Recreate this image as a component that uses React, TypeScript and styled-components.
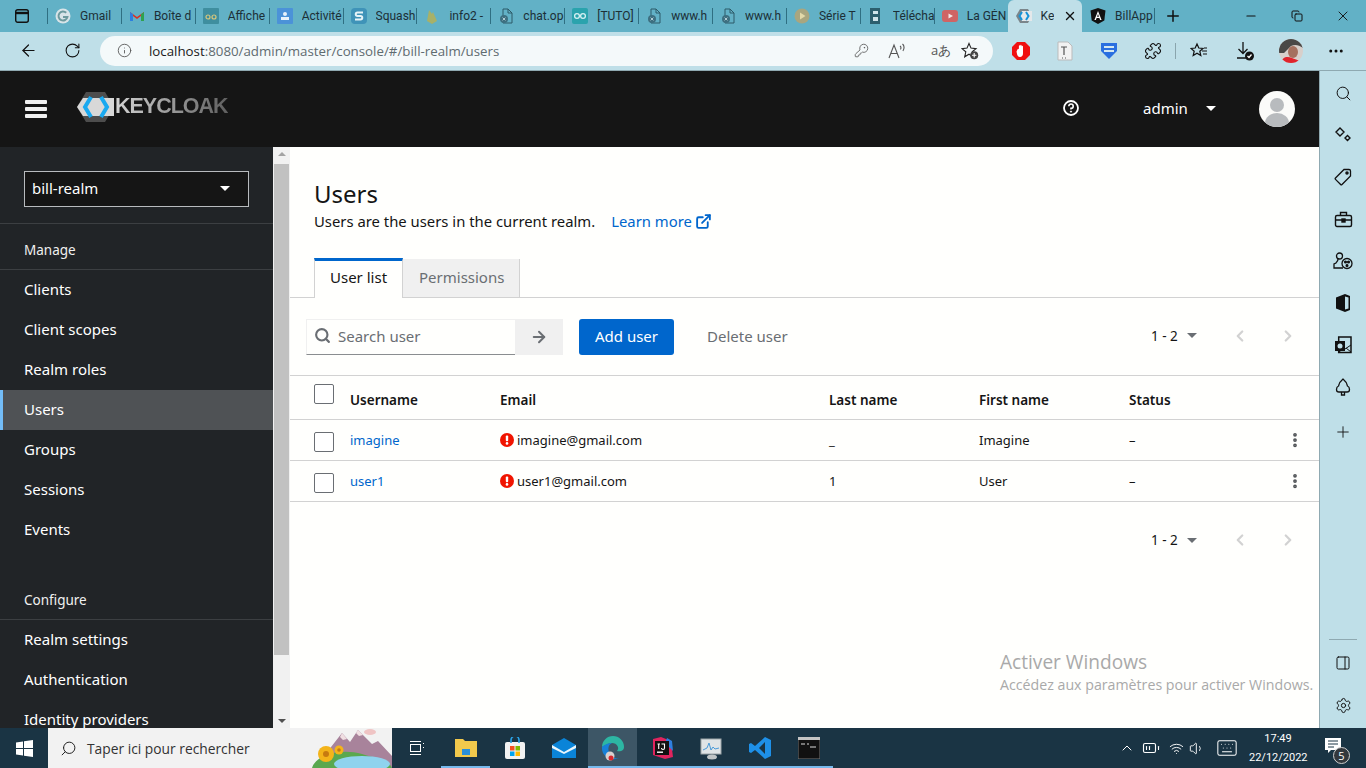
import styled, { createGlobalStyle } from "styled-components";
import {
  ArrowLeft, ArrowRight, ChevronLeft, ChevronRight, ChevronUp, Copy, ExternalLink,
  Info, KeyRound, Minus, MoreHorizontal, MoreVertical, PanelRight, Plus, Puzzle, RotateCw,
  Search, Settings, Wifi, Volume1, BatteryMedium, Keyboard, X,
} from "lucide-react";

const Global = createGlobalStyle`
  html, body { margin: 0; padding: 0; height: 100%; overflow: hidden; }
  body { font-family: "Noto Sans", "Open Sans", sans-serif; color: #151515; background: #fff; }
  * { box-sizing: border-box; }
`;

const Page = styled.div`
  width: 1366px;
  height: 768px;
  display: flex;
  flex-direction: column;
  overflow: hidden;
  position: relative;
`;

/* browser chrome */
const TabStrip = styled.div`
  height: 32px;
  display: flex;
  align-items: stretch;
  background: #62b1c6;
  font-family: Roboto, "Open Sans", sans-serif;
  font-size: 12px;
`;
const TabToggle = styled.div`
  width: 47px;
  display: flex;
  align-items: center;
  justify-content: center;
  padding-right: 4px;
`;
const BrowserTab = styled.div`
  width: 73.9px;
  display: flex;
  align-items: center;
  gap: 9px;
  padding-left: 8px;
  white-space: nowrap;
  overflow: hidden;
  color: #1c2f36;
  position: relative;
  &::before {
    content: "";
    position: absolute;
    left: 0;
    top: 8px;
    bottom: 8px;
    width: 1px;
    background: #2f6f82;
  }
`;
const ActiveTab = styled(BrowserTab)`
  width: 74.5px;
  padding-right: 5px;
  background: #bfdfe8;
  border-radius: 6px 6px 0 0;
  &::before { display: none; }
`;
const LastTab = styled(BrowserTab)`
  width: 71.5px;
  &::before { display: none; }
`;
const TabLabel = styled.span`
  flex: 1;
  overflow: hidden;
`;
const NewTab = styled.div`
  width: 38px;
  border-left: 1px solid #2f6f82;
  margin: 8px 0;
  display: flex;
  align-items: center;
  justify-content: center;
`;
const WindowButtons = styled.div`
  margin-left: auto;
  display: flex;
`;
const WindowButton = styled.div`
  width: 46px;
  display: flex;
  align-items: center;
  justify-content: center;
`;
const AddressRow = styled.div`
  height: 39px;
  display: flex;
  align-items: center;
  background: #bfdfe8;
  border-bottom: 1px solid #8fa9b1;
  padding-bottom: 1px;
`;
const NavIcon = styled.div`
  width: 44px;
  flex: none;
  display: flex;
  align-items: center;
  justify-content: center;
`;
const NavGroup = styled.div`
  width: 100px;
  flex: none;
  display: flex;
  padding-left: 6px;
`;
const AddressPill = styled.div`
  width: 893px;
  height: 30px;
  border-radius: 15px;
  background: #f4f9fa;
  display: flex;
  align-items: center;
  padding: 0 11px 0 17px;
  font-family: "Open Sans", sans-serif;
  font-size: 13.3px;
  color: #5f6b70;
`;
const Url = styled.span`
  margin-left: 17px;
  flex: 1;
  b { font-weight: 400; color: #1a1a1a; }
`;
const PillTool = styled.div<{ $w: number }>`
  width: ${(p) => p.$w}px;
  display: flex;
  align-items: center;
  justify-content: center;
  color: #555;
  font-size: 13px;
`;
const ChromeTools = styled.div`
  display: flex;
  align-items: center;
  margin-left: 6px;
`;
const ChromeTool = styled.div<{ $w?: number }>`
  width: ${(p) => p.$w ?? 44}px;
  display: flex;
  align-items: center;
  justify-content: center;
`;
const ToolDivider = styled.div`
  width: 1px;
  height: 16px;
  background: #8aa5ad;
`;

/* workspace */
const Workspace = styled.div`
  flex: 1;
  min-height: 0;
  display: flex;
`;
const Console = styled.div`
  flex: 1;
  min-width: 0;
  display: flex;
  flex-direction: column;
`;
const Masthead = styled.header`
  height: 76px;
  flex: none;
  background: #151515;
  display: flex;
  align-items: center;
  color: #fff;
  padding-left: 25px;
`;
const Burger = styled.div`
  width: 52px;
  display: flex;
  flex-direction: column;
  gap: 3px;
  span { display: block; width: 22px; height: 4px; background: #f0f0f0; border-radius: 1px; }
`;
const Logo = styled.div`
  display: flex;
  align-items: center;
  margin-bottom: 4px;
`;
const LogoText = styled.span`
  font-family: "Liberation Sans", sans-serif;
  font-weight: 700;
  font-size: 21.5px;
  letter-spacing: -1px;
  margin-left: 1px;
  margin-bottom: 2px;
  background: linear-gradient(90deg, #d4d4d4, #5f5f5f);
  -webkit-background-clip: text;
  background-clip: text;
  color: transparent;
`;
const MastRight = styled.div`
  margin-left: auto;
  display: flex;
  align-items: center;
  padding-right: 24px;
`;
const HelpIcon = styled.svg`
  margin-bottom: 2px;
`;
const AdminMenu = styled.div`
  margin-left: 64px;
  width: 116px;
  display: flex;
  align-items: center;
  font-size: 15px;
  gap: 18px;
  padding-bottom: 2px;
`;
const Caret = styled.i<{ $color?: string; $w?: number }>`
  display: inline-block;
  width: 0;
  height: 0;
  border-left: ${(p) => p.$w ?? 5}px solid transparent;
  border-right: ${(p) => p.$w ?? 5}px solid transparent;
  border-top: ${(p) => p.$w ?? 5}px solid ${(p) => p.$color ?? "#fff"};
`;
const Body = styled.div`
  flex: 1;
  min-height: 0;
  display: flex;
`;
const Sidebar = styled.nav`
  width: 273px;
  flex: none;
  background: #212427;
  color: #fff;
  overflow: hidden;
`;
const RealmBox = styled.div`
  padding: 24px 24px 16px;
  border-bottom: 1px solid #3c3f42;
`;
const RealmSelect = styled.div`
  height: 36px;
  background: #151515;
  border: 1px solid #b8bbbe;
  display: flex;
  align-items: center;
  justify-content: space-between;
  padding: 0 18px 2px 7px;
  font-size: 15px;
`;
const NavHeading = styled.div<{ $gap?: number }>`
  height: 46px;
  margin-top: ${(p) => p.$gap ?? 0}px;
  padding: 16px 24px 0;
  font-size: 13.5px;
  line-height: 20px;
  color: #f0f0f0;
  border-bottom: 1px solid #3c3f42;
`;
const NavItem = styled.div<{ $active?: boolean }>`
  height: 40px;
  display: flex;
  align-items: center;
  padding: 0 0 2px 24px;
  font-size: 15px;
  background: ${(p) => (p.$active ? "#4f5255" : "transparent")};
  box-shadow: ${(p) => (p.$active ? "inset 3px 0 0 #73bcf7" : "none")};
`;
const ScrollTrack = styled.div`
  width: 17px;
  flex: none;
  background: #f1f1f1;
  display: flex;
  flex-direction: column;
  align-items: center;
  padding: 5px 0;
`;
const ScrollThumb = styled.div`
  width: 15px;
  height: 491px;
  margin: 8px 0 auto;
  background: #c1c1c1;
`;
const ScrollArrow = styled.i<{ $down?: boolean }>`
  width: 0;
  height: 0;
  border-left: 4px solid transparent;
  border-right: 4px solid transparent;
  ${(p) => (p.$down ? "border-top: 4px solid #505050;" : "border-bottom: 4px solid #a3a3a3;")}
`;
const Main = styled.main`
  flex: 1;
  min-width: 0;
  background: #fffffd;
`;
const TitleBlock = styled.div`
  padding: 32px 24px 0;
  height: 111px;
`;
const Title = styled.h1`
  margin: 0;
  font-size: 24px;
  font-weight: 400;
  line-height: 30px;
`;
const Subtitle = styled.p`
  margin: 0;
  font-size: 14.85px;
  line-height: 24px;
  display: flex;
  align-items: center;
`;
const LearnMore = styled.span`
  margin-left: 16px;
  color: #06c;
  display: inline-flex;
  align-items: center;
  gap: 3px;
`;
const TabRow = styled.div`
  height: 40px;
  display: flex;
  align-items: stretch;
  padding-left: 24px;
  border-bottom: 1px solid #d2d2d2;
`;
const PageTab = styled.div<{ $active?: boolean }>`
  display: flex;
  align-items: center;
  white-space: nowrap;
  font-size: 15px;
  ${(p) =>
    p.$active
      ? "height: 40px; width: 89px; padding: 0 15px 5px; background: #fffffd; border-top: 3px solid #06c; border-left: 1px solid #d2d2d2; border-right: 1px solid #d2d2d2; color: #151515;"
      : "width: 117px; padding: 0 16px 2px; margin-top: 1px; background: #f0f0f0; color: #6a6e73; border-right: 1px solid #d2d2d2;"}
`;
const Toolbar = styled.div`
  height: 78px;
  display: flex;
  align-items: center;
  padding: 0 16px;
  border-bottom: 1px solid #d2d2d2;
`;
const SearchBox = styled.div`
  width: 209px;
  height: 36px;
  display: flex;
  align-items: center;
  gap: 7px;
  padding: 0 0 2px 7px;
  border: 1px solid #f0f0f0;
  border-bottom-color: #8a8d90;
  border-right: none;
  font-size: 15px;
  color: #6a6e73;
`;
const SearchGo = styled.div`
  width: 48px;
  height: 36px;
  background: #f0f0f0;
  display: flex;
  align-items: center;
  justify-content: center;
`;
const PrimaryButton = styled.div`
  margin-left: 16px;
  width: 95px;
  height: 36px;
  padding-bottom: 2px;
  background: #06c;
  color: #fff;
  border-radius: 3px;
  display: flex;
  align-items: center;
  justify-content: center;
  font-size: 15px;
`;
const LinkButton = styled.div`
  margin-left: 33px;
  padding-bottom: 2px;
  font-size: 15px;
  color: #6a6e73;
`;
const Pager = styled.div`
  margin-left: auto;
  display: flex;
  align-items: center;
  font-size: 13.5px;
  padding: 0 6px 2px 0;
`;
const PagerCount = styled.span`
  width: 36px;
  white-space: nowrap;
`;
const PagerArrows = styled.span`
  margin-left: 34px;
  display: flex;
  gap: 30px;
  color: #d2d2d2;
`;
const TableRow = styled.div<{ $head?: boolean }>`
  display: grid;
  grid-template-columns: 60px 150px 329px 150px 150px 1fr 33px;
  height: ${(p) => (p.$head ? 44 : 41)}px;
  align-items: center;
  font-size: ${(p) => (p.$head ? 13.5 : 13)}px;
  font-weight: ${(p) => (p.$head ? 600 : 400)};
  border-bottom: 1px solid #d2d2d2;
`;
const CheckCell = styled.div`
  padding-left: 24px;
`;
const Check = styled.div<{ $lift?: boolean }>`
  width: 20px;
  height: 20px;
  border: 1px solid #6a6e73;
  border-radius: 2px;
  background: #fff;
  transform: translateY(${(p) => (p.$lift ? -4 : 2)}px);
`;
const HeadCell = styled.div`
  padding-top: 4px;
`;
const UserLink = styled.span`
  color: #06c;
`;
const EmailCell = styled.div`
  display: flex;
  align-items: center;
  gap: 3px;
`;
const Kebab = styled.div`
  display: flex;
  color: #4f5255;
`;
const BottomPager = styled.div`
  height: 78px;
  display: flex;
  align-items: center;
  padding: 0 16px;
`;
const Watermark = styled.div`
  position: absolute;
  left: 1000px;
  top: 649px;
  color: #a9a9a9;
  font-family: "Open Sans", sans-serif;
  font-size: 14.2px;
  line-height: 20px;
  white-space: nowrap;
  strong { display: block; font-weight: 400; font-size: 19.1px; line-height: 26px; }
`;
const SidePanel = styled.aside`
  width: 47px;
  flex: none;
  background: #bfdfe8;
  border-left: 1px solid #8fa9b1;
  display: flex;
  flex-direction: column;
  align-items: center;
  padding: 1px 0 2px;
`;
const SideIcon = styled.div<{ $h?: number }>`
  height: ${(p) => p.$h ?? 42}px;
  display: flex;
  align-items: center;
  justify-content: center;
`;
const SideRule = styled.div`
  width: 28px;
  height: 1px;
  margin: auto 0 2px;
  background: #8fa9b1;
`;

/* taskbar */
const Taskbar = styled.footer`
  height: 40px;
  flex: none;
  background: #1a3444;
  display: flex;
  align-items: stretch;
  color: #fff;
  font-family: "Open Sans", sans-serif;
`;
const StartButton = styled.div`
  width: 48px;
  display: flex;
  align-items: center;
  justify-content: center;
`;
const TaskSearch = styled.div`
  width: 344px;
  background: #f2f2f2;
  color: #333;
  font-size: 13.8px;
  display: flex;
  align-items: center;
  padding-left: 12px;
  gap: 10px;
  position: relative;
  overflow: hidden;
`;
const MirroredSearch = styled(Search)`
  transform: scaleX(-1);
`;
const SearchArt = styled.div`
  position: absolute;
  right: 0;
  top: 0;
  height: 40px;
`;
const TaskApp = styled.div<{ $open?: boolean; $active?: boolean }>`
  width: 49px;
  display: flex;
  align-items: center;
  justify-content: center;
  background: ${(p) => (p.$active ? "#3d5666" : "transparent")};
  box-shadow: ${(p) => (p.$open ? "inset 0 -2px 0 #76b9ed" : "none")};
`;
const Tray = styled.div`
  margin-left: auto;
  display: flex;
  align-items: center;
`;
const TrayIcon = styled.div<{ $w?: number }>`
  width: ${(p) => p.$w ?? 24}px;
  display: flex;
  align-items: center;
  justify-content: center;
`;
const Clock = styled.div`
  width: 58px;
  text-align: center;
  white-space: nowrap;
  font-family: Roboto, sans-serif;
  font-size: 11px;
  line-height: 19px;
`;
const Notify = styled.div`
  width: 48px;
  align-self: stretch;
  margin-left: 11px;
  padding: 0 18px 6px 0;
  position: relative;
  display: flex;
  align-items: center;
  justify-content: center;
`;
const NotifyBadge = styled.span`
  position: absolute;
  left: 15px;
  top: 19px;
  width: 17px;
  height: 17px;
  border-radius: 50%;
  background: #33383d;
  border: 1px solid #cfcfcf;
  font-size: 11px;
  line-height: 15px;
  text-align: center;
`;

const Favicon = ({ kind }: { kind: string }) => {
  const s = { width: 16, height: 16, flex: "none" as const };
  switch (kind) {
    case "google":
      return (
        <svg viewBox="0 0 16 16" style={s}>
          <circle cx="8" cy="8" r="7.5" fill="#d8e4e8" />
          <path d="M11.2 4.8A4.5 4.5 0 1 0 12.4 9H8" fill="none" stroke="#6d9a9e" strokeWidth="2" />
        </svg>
      );
    case "gmail":
      return (
        <svg viewBox="0 0 16 16" style={s}>
          <path d="M1 13V4l7 5 7-5v9h-3V8L8 11 4 8v5z" fill="#d93025" />
          <path d="M1 13V4l3 2.2V13z" fill="#2c7fe0" />
          <path d="M15 13V4l-3 2.2V13z" fill="#2fa24f" />
        </svg>
      );
    case "teal":
      return (
        <svg viewBox="0 0 16 16" style={s}>
          <rect width="16" height="16" rx="1" fill="#3f8e9f" />
          <circle cx="5" cy="9" r="2" fill="none" stroke="#d6c77c" strokeWidth="1.2" />
          <circle cx="11" cy="9" r="2" fill="none" stroke="#d6c77c" strokeWidth="1.2" />
        </svg>
      );
    case "activity":
      return (
        <svg viewBox="0 0 16 16" style={s}>
          <rect width="16" height="16" rx="1" fill="#4b92d8" />
          <circle cx="8" cy="6" r="2" fill="#e8f3fb" />
          <rect x="4" y="9" width="8" height="3" fill="#e8f3fb" />
        </svg>
      );
    case "squash":
      return (
        <svg viewBox="0 0 16 16" style={s}>
          <rect width="16" height="16" rx="4" fill="#3f93b8" />
          <path d="M12 4.5H6.5a1.7 1.7 0 0 0 0 3.5h3a1.7 1.7 0 0 1 0 3.5H4" fill="none" stroke="#e6f3f7" strokeWidth="2" />
        </svg>
      );
    case "fire":
      return (
        <svg viewBox="0 0 16 16" style={s}>
          <path d="M3 13L5 2l3 4 1-2 4 9-5 3z" fill="#a7b168" />
        </svg>
      );
    case "doc":
      return (
        <svg viewBox="0 0 16 16" style={s}>
          <path d="M5 1h5l4 4v10H5z" fill="none" stroke="#2d5a68" />
          <path d="M10 1v4h4" fill="none" stroke="#2d5a68" />
          <circle cx="6" cy="11" r="4" fill="#3d6f80" />
          <path d="M4.6 9.6l2.8 2.8M7.4 9.6l-2.8 2.8" stroke="#cfe4ea" strokeWidth=".8" />
        </svg>
      );
    case "arduino":
      return (
        <svg viewBox="0 0 16 16" style={s}>
          <rect width="16" height="16" rx="2" fill="#2aa3ad" />
          <circle cx="5" cy="8" r="2.4" fill="none" stroke="#d5f0f2" strokeWidth="1.3" />
          <circle cx="11" cy="8" r="2.4" fill="none" stroke="#d5f0f2" strokeWidth="1.3" />
        </svg>
      );
    case "play":
      return (
        <svg viewBox="0 0 16 16" style={s}>
          <circle cx="8" cy="8" r="7.5" fill="#a9a67f" />
          <path d="M6 4.5l5.5 3.5L6 11.5z" fill="#e2d9a9" />
        </svg>
      );
    case "tele":
      return (
        <svg viewBox="0 0 16 16" style={s}>
          <rect x="2" y="0" width="10" height="16" fill="#2c5f6e" />
          <rect x="5" y="3" width="5" height="3" fill="#cfe4ea" />
          <rect x="5" y="9" width="5" height="4" fill="#cfe4ea" />
        </svg>
      );
    case "youtube":
      return (
        <svg viewBox="0 0 16 16" style={s}>
          <rect y="2" width="16" height="12" rx="3" fill="#cf6464" />
          <path d="M6.5 5.5L11 8l-4.5 2.5z" fill="#f2e6e6" />
        </svg>
      );
    case "keycloak":
      return (
        <svg viewBox="0 0 16 16" style={s}>
          <path d="M4 1h8l4 7-4 7H4L0 8z" fill="#7b858a" />
          <path d="M3 8l3-5h10v10H6z" fill="#e4e8ea" />
          <path d="M6 4L3.5 8 6 12M10 4l2.5 4-2.5 4" fill="none" stroke="#1793d8" strokeWidth="2" />
        </svg>
      );
    default:
      return (
        <svg viewBox="0 0 16 16" style={s}>
          <path d="M8 0l7.5 2.6-1.2 9.8L8 16l-6.3-3.6L.5 2.6z" fill="#111" />
          <path d="M8 3l3.6 9h-1.5l-.7-2H6.6l-.7 2H4.4zM8 6l-1 2.7h2z" fill="#fff" />
        </svg>
      );
  }
};

const KeycloakMark = () => (
  <svg width="37" height="30" viewBox="0 0 37 30">
    <path d="M9 0h19l9 15-9 15H9L0 15z" fill="#4d4d4d" />
    <path d="M0 15l6-9h31v18H6z" fill="#d8d8d8" />
    <path d="M14 5L8 15l6 10M24 5l6 10-6 10" fill="none" stroke="#19a9f0" strokeWidth="4" />
  </svg>
);

const WarnIcon = () => (
  <svg width="14" height="14" viewBox="0 0 14 14">
    <circle cx="7" cy="7" r="7" fill="#f01400" />
    <rect x="5.8" y="2.6" width="2.4" height="5.6" rx="1" fill="#fff" />
    <circle cx="7" cy="10.4" r="1.3" fill="#fff" />
  </svg>
);

const browserTabs: [string, string][] = [
  ["google", "Gmail"], ["gmail", "Boîte d"], ["teal", "Affiche"], ["activity", "Activité"],
  ["squash", "Squash"], ["fire", "info2 -"], ["doc", "chat.op"], ["arduino", "[TUTO]"],
  ["doc", "www.h"], ["doc", "www.h"], ["play", "Série T"], ["tele", "Télécha"], ["youtube", "La GÉN"],
];

const Pagination = () => (
  <Pager>
    <PagerCount>1 - 2</PagerCount>
    <Caret $color="#6a6e73" />
    <PagerArrows>
      <ChevronLeft size={18} strokeWidth={3} />
      <ChevronRight size={18} strokeWidth={3} />
    </PagerArrows>
  </Pager>
);

const users = [
  { name: "imagine", email: "imagine@gmail.com", last: "_", first: "Imagine" },
  { name: "user1", email: "user1@gmail.com", last: "1", first: "User" },
];

export default function App() {
  return (
    <Page>
      <Global />
      <TabStrip>
        <TabToggle>
          <svg width="16" height="16" viewBox="0 0 16 16" fill="none" stroke="#111" strokeWidth="1.4">
            <rect x="1.7" y="1.7" width="12.6" height="12.6" rx="2" />
            <path d="M2 5h12" strokeWidth="2.4" />
          </svg>
        </TabToggle>
        {browserTabs.map(([kind, label], i) => (
          <BrowserTab key={i}>
            <Favicon kind={kind} />
            <TabLabel>{label}</TabLabel>
          </BrowserTab>
        ))}
        <ActiveTab>
          <Favicon kind="keycloak" />
          <TabLabel>Ke</TabLabel>
          <X size={14} color="#111" strokeWidth={2.4} />
        </ActiveTab>
        <LastTab>
          <Favicon kind="angular" />
          <TabLabel>BillApp</TabLabel>
        </LastTab>
        <NewTab>
          <Plus size={18} color="#111" />
        </NewTab>
        <WindowButtons>
          <WindowButton><Minus size={14} color="#111" /></WindowButton>
          <WindowButton><Copy size={12} color="#111" /></WindowButton>
          <WindowButton><X size={16} color="#111" strokeWidth={1.4} /></WindowButton>
        </WindowButtons>
      </TabStrip>

      <AddressRow>
        <NavGroup>
          <NavIcon><ArrowLeft size={19} strokeWidth={1.5} color="#111" /></NavIcon>
          <NavIcon><RotateCw size={17} strokeWidth={1.5} color="#111" /></NavIcon>
        </NavGroup>
        <AddressPill>
          <Info size={15} strokeWidth={1.4} color="#555" />
          <Url><b>localhost</b>:8080/admin/master/console/#/bill-realm/users</Url>
          <PillTool $w={22}><KeyRound size={15} strokeWidth={1.3} /></PillTool>
          <PillTool $w={52}>
            <svg width="20" height="16" viewBox="0 0 20 16" fill="none" stroke="#555" strokeWidth="1.1">
              <path d="M1 15L6 2l5 13M3 10.5h6M12 3c1.2.8 1.2 2.4.4 3.4M14.5 1c2 1.6 2 5 .4 7" />
            </svg>
          </PillTool>
          <PillTool $w={34}>aあ</PillTool>
          <PillTool $w={24}>
            <svg width="18" height="18" viewBox="0 0 18 18" fill="none" stroke="#222" strokeWidth="1.1">
              <path d="M8 1.5l2 4.6 5 .5-3.8 3.2 1.1 5-4.3-2.6-4.3 2.6 1.1-5L1 6.6l5-.5z" />
              <circle cx="13.2" cy="13.2" r="4" fill="#444" stroke="none" />
              <path d="M13.2 11v4.4M11 13.2h4.4" stroke="#fff" />
            </svg>
          </PillTool>
        </AddressPill>
        <ChromeTools>
          <ChromeTool>
            <svg width="20" height="20" viewBox="0 0 20 20">
              <path d="M6 1h8l5 5v8l-5 5H6l-5-5V6z" fill="#f01010" />
              <path d="M6.500 8.500c0-1 1.400-1 1.400 0V5c0-1 1.300-1 1.300 0V4.500c0-1 1.400-1 1.400 0V5.500c0-1 1.400-1 1.400 0v7c0 2-1.200 3.500-3 3.500s-2.500-1-3-3l-.5-2.500z" fill="#fff" />
            </svg>
          </ChromeTool>
          <ChromeTool>
            <svg width="16" height="20" viewBox="0 0 16 20">
              <path d="M1 1h10l4 4v14H1z" fill="#f2f2f2" stroke="#bbb" />
              <path d="M4 6h6M7 6v8M5 17h1M8 17h1" stroke="#555" strokeWidth="1.2" />
            </svg>
          </ChromeTool>
          <ChromeTool>
            <svg width="18" height="18" viewBox="0 0 18 18">
              <path d="M1 1h16v8l-8 8-8-8z" fill="#2a6fe0" />
              <path d="M4 5h10M4 9h10" stroke="#d5e8f0" strokeWidth="2" />
            </svg>
          </ChromeTool>
          <ChromeTool><Puzzle size={18} strokeWidth={1.5} color="#111" /></ChromeTool>
          <ToolDivider />
          <ChromeTool $w={46}>
            <svg width="18" height="18" viewBox="0 0 18 18" fill="none" stroke="#111" strokeWidth="1.2">
              <path d="M7 2l1.800 4 4.200.4-3.200 2.800 1 4.300L7 11.200 3.200 13.500l1-4.300L1 6.400l4.200-.4zM12 9h5M13 12h4M14 6h3" />
            </svg>
          </ChromeTool>
          <ChromeTool $w={46}>
            <svg width="20" height="20" viewBox="0 0 20 20" fill="none" stroke="#111" strokeWidth="1.3">
              <path d="M8 1v11M3.500 8L8 12.500 12.500 8M2 17h9" />
              <circle cx="14.500" cy="15" r="4.500" fill="#111" stroke="none" />
              <path d="M12.500 15l1.500 1.500 2.500-3" stroke="#fff" />
            </svg>
          </ChromeTool>
          <ChromeTool $w={46}>
            <svg width="24" height="24" viewBox="0 0 24 24">
              <clipPath id="pf"><ellipse cx="12" cy="12" rx="12" ry="12" /></clipPath>
              <g clipPath="url(#pf)">
                <rect width="24" height="24" fill="#d8cfca" />
                <path d="M0 0h24v9c-4-3-8-4-12-2L5 14H0z" fill="#4a4846" />
                <ellipse cx="14" cy="13" rx="5" ry="6" fill="#a5705e" />
                <path d="M2 24c1-6 6-7 11-5s8 2 9 5z" fill="#e0242c" />
              </g>
            </svg>
          </ChromeTool>
          <ChromeTool><MoreHorizontal size={18} color="#111" /></ChromeTool>
        </ChromeTools>
      </AddressRow>

      <Workspace>
        <Console>
          <Masthead>
            <Burger><span /><span /><span /></Burger>
            <Logo>
              <KeycloakMark />
              <LogoText>KEYCLOAK</LogoText>
            </Logo>
            <MastRight>
              <HelpIcon width="16" height="16" viewBox="0 0 16 16" fill="none" stroke="#fff">
                <circle cx="8" cy="8" r="7" strokeWidth="1.8" />
                <path d="M5.800 6.200A2.200 2.200 0 1 1 8 8.400v1.200" strokeWidth="1.6" />
                <circle cx="8" cy="11.600" r=".6" fill="#fff" />
              </HelpIcon>
              <AdminMenu>admin <Caret /></AdminMenu>
              <svg width="36" height="36" viewBox="0 0 36 36">
                <clipPath id="av"><circle cx="18" cy="18" r="18" /></clipPath>
                <g clipPath="url(#av)">
                  <rect width="36" height="36" fill="#fbfbf9" />
                  <circle cx="18" cy="14" r="7" fill="#b8bbbe" />
                  <ellipse cx="18" cy="32" rx="12" ry="10" fill="#b8bbbe" />
                </g>
              </svg>
            </MastRight>
          </Masthead>
          <Body>
            <Sidebar>
              <RealmBox>
                <RealmSelect>bill-realm <Caret /></RealmSelect>
              </RealmBox>
              <NavHeading>Manage</NavHeading>
              <NavItem>Clients</NavItem>
              <NavItem>Client scopes</NavItem>
              <NavItem>Realm roles</NavItem>
              <NavItem $active>Users</NavItem>
              <NavItem>Groups</NavItem>
              <NavItem>Sessions</NavItem>
              <NavItem>Events</NavItem>
              <NavHeading $gap={24}>Configure</NavHeading>
              <NavItem>Realm settings</NavItem>
              <NavItem>Authentication</NavItem>
              <NavItem>Identity providers</NavItem>
            </Sidebar>
            <ScrollTrack>
              <ScrollArrow />
              <ScrollThumb />
              <ScrollArrow $down />
            </ScrollTrack>
            <Main>
              <TitleBlock>
                <Title>Users</Title>
                <Subtitle>
                  Users are the users in the current realm.
                  <LearnMore>Learn more <ExternalLink size={17} strokeWidth={2.6} /></LearnMore>
                </Subtitle>
              </TitleBlock>
              <TabRow>
                <PageTab $active>User list</PageTab>
                <PageTab>Permissions</PageTab>
              </TabRow>
              <Toolbar>
                <SearchBox>
                  <Search size={17} strokeWidth={3} color="#6a6e73" />
                  Search user
                </SearchBox>
                <SearchGo><ArrowRight size={18} strokeWidth={2.6} color="#6a6e73" /></SearchGo>
                <PrimaryButton>Add user</PrimaryButton>
                <LinkButton>Delete user</LinkButton>
                <Pagination />
              </Toolbar>
              <TableRow $head>
                <CheckCell><Check $lift /></CheckCell>
                <HeadCell>Username</HeadCell>
                <HeadCell>Email</HeadCell>
                <HeadCell>Last name</HeadCell>
                <HeadCell>First name</HeadCell>
                <HeadCell>Status</HeadCell>
              </TableRow>
              {users.map((u) => (
                <TableRow key={u.name}>
                  <CheckCell><Check /></CheckCell>
                  <UserLink>{u.name}</UserLink>
                  <EmailCell><WarnIcon />{u.email}</EmailCell>
                  <div>{u.last}</div>
                  <div>{u.first}</div>
                  <div>–</div>
                  <Kebab><MoreVertical size={18} strokeWidth={3} /></Kebab>
                </TableRow>
              ))}
              <BottomPager><Pagination /></BottomPager>
            </Main>
          </Body>
        </Console>
        <SidePanel>
          <SideIcon><Search size={17} strokeWidth={1.4} color="#111" /></SideIcon>
          <SideIcon>
            <svg width="18" height="18" viewBox="0 0 18 18" fill="none" stroke="#111" strokeWidth="1.4">
              <path d="M6 2l4 4-4 4-4-4zM13.500 9.500l2.500 2.500-2.500 2.500-2.500-2.500z" />
            </svg>
          </SideIcon>
          <SideIcon>
            <svg width="18" height="18" viewBox="0 0 18 18" fill="none" stroke="#111" strokeWidth="1.3">
              <path d="M10 1.500h5a1.500 1.500 0 0 1 1.500 1.500v5L8 16.500a1 1 0 0 1-1.400 0L1.500 11.400a1 1 0 0 1 0-1.400z" />
              <circle cx="13" cy="5" r="1.100" fill="#111" />
            </svg>
          </SideIcon>
          <SideIcon>
            <svg width="19" height="17" viewBox="0 0 19 17" fill="none" stroke="#111" strokeWidth="1.4">
              <rect x="1.500" y="4.500" width="16" height="11" rx="1.500" />
              <path d="M6.500 4.500v-3h6v3M1.500 9h16" />
              <rect x="8" y="8" width="3" height="3" fill="#111" />
            </svg>
          </SideIcon>
          <SideIcon>
            <svg width="20" height="18" viewBox="0 0 20 18" fill="none" stroke="#111" strokeWidth="1.3">
              <circle cx="6.500" cy="4" r="3" />
              <path d="M5 7c0 2-1 2.500-2 4l-2 1v4h9" />
              <circle cx="14" cy="11.500" r="5" />
              <circle cx="12.500" cy="10" r=".9" fill="#111" />
              <circle cx="15.500" cy="10" r=".9" fill="#111" />
              <circle cx="14" cy="13.500" r=".9" fill="#111" />
            </svg>
          </SideIcon>
          <SideIcon>
            <svg width="16" height="20" viewBox="0 0 16 20">
              <path d="M1 4.500L10 1l5 2v14l-5 2-9-3.500z" fill="#111" />
              <path d="M10 3.500v13l3.500-1V4.500z" fill="#bfdfe8" />
            </svg>
          </SideIcon>
          <SideIcon>
            <svg width="18" height="18" viewBox="0 0 18 18">
              <rect x="4.700" y="1" width="12.300" height="15.500" fill="none" stroke="#111" strokeWidth="1.500" />
              <path d="M5 9l6 4 6-4M5 16l5-4M17 16l-5-4" fill="none" stroke="#111" />
              <rect x="1" y="5" width="10" height="10" fill="#111" />
              <circle cx="6" cy="10" r="2.500" fill="#bfdfe8" />
            </svg>
          </SideIcon>
          <SideIcon>
            <svg width="18" height="18" viewBox="0 0 18 18" fill="none" stroke="#111" strokeWidth="1.3">
              <path d="M9 1C6.500 3 5 5.500 4.500 8 2 9 1.500 14 5 14h8c3.500 0 3-5 .5-6C13 5.500 11.500 3 9 1zM7.500 14v3h3v-3" />
            </svg>
          </SideIcon>
          <SideIcon $h={48}><Plus size={18} strokeWidth={1.2} color="#111" /></SideIcon>
          <SideRule />
          <SideIcon><PanelRight size={16} strokeWidth={1.5} color="#111" /></SideIcon>
          <SideIcon><Settings size={17} strokeWidth={1.4} color="#111" /></SideIcon>
        </SidePanel>
      </Workspace>

      <Taskbar>
        <StartButton>
          <svg width="17" height="17" viewBox="0 0 17 17" fill="#fff">
            <path d="M0 2.400L7 1.400v6.600H0zM8 1.300L17 0v8H8zM0 9h7v6.600l-7-1zM8 9h9v8l-9-1.300z" />
          </svg>
        </StartButton>
        <TaskSearch>
          <MirroredSearch size={17} strokeWidth={1.4} color="#222" />
          Taper ici pour rechercher
          <SearchArt>
            <svg width="80" height="40" viewBox="0 0 80 40">
              <path d="M12 28L30 5l8 9 8-12 14 14 6-3 14 15v12H12z" fill="#a8839b" />
              <path d="M30 5l5 6-4 1-3-3zM46 2l5 5-4 1-3-3z" fill="#f0dfe2" />
              <ellipse cx="58" cy="4" rx="6" ry="3" fill="#efc4c4" />
              <path d="M0 40c4-14 30-20 50-14s26 6 30 14z" fill="#5aa84f" />
              <ellipse cx="50" cy="36" rx="28" ry="8" fill="#8fd3ee" />
              <circle cx="14" cy="26" r="8" fill="#f4b41a" />
              <circle cx="14" cy="26" r="3" fill="#c77a10" />
              <circle cx="27" cy="22" r="4.500" fill="#f4b41a" />
              <circle cx="27" cy="22" r="1.800" fill="#c77a10" />
            </svg>
          </SearchArt>
        </TaskSearch>
        <TaskApp>
          <svg width="16" height="16" viewBox="0 0 16 16" fill="none" stroke="#fff">
            <rect x="1.500" y="4.500" width="10" height="7" />
            <path d="M1 1.500h11M1 14.500h11M14.500 3v1M14.500 7v1" />
          </svg>
        </TaskApp>
        <TaskApp $open>
          <svg width="22" height="20" viewBox="0 0 22 20">
            <path d="M0 1h8l2 2h12v16H0z" fill="#f2c94c" />
            <rect x="7" y="11" width="8" height="6" fill="#2a8fd8" />
          </svg>
        </TaskApp>
        <TaskApp>
          <svg width="20" height="22" viewBox="0 0 20 22">
            <rect y="5" width="20" height="17" rx="2" fill="#f2f2f2" />
            <path d="M6 6V3a4 4 0 0 1 8 0v3" fill="none" stroke="#2aa3e8" strokeWidth="1.600" />
            <rect x="5" y="9" width="4.500" height="4.500" fill="#f25022" />
            <rect x="10.500" y="9" width="4.500" height="4.500" fill="#7fba00" />
            <rect x="5" y="14.500" width="4.500" height="4.500" fill="#00a4ef" />
            <rect x="10.500" y="14.500" width="4.500" height="4.500" fill="#ffb900" />
          </svg>
        </TaskApp>
        <TaskApp>
          <svg width="24" height="20" viewBox="0 0 24 20">
            <path d="M0 7l12-7 12 7v13H0z" fill="#0a84d8" />
            <path d="M0 7l12 7 12-7v3l-12 6L0 10z" fill="#e8f5fc" />
          </svg>
        </TaskApp>
        <TaskApp $active $open>
          <svg width="24" height="26" viewBox="0 0 24 26">
            <path d="M1 12a11 11 0 0 1 22 0c0 4-4 5-7 4 3-3 0-8-5-8-4 0-8 3-10 4z" fill="#2db6a3" />
            <path d="M1 12c2-2 6-4 10-4-5 2-5 10 1 14 2 1 3 2 6 1-8 4-18-2-17-11z" fill="#1780d8" />
            <circle cx="9" cy="21" r="4.500" fill="#d9d1cf" />
            <circle cx="10" cy="23" r="2.500" fill="#d8262c" />
          </svg>
        </TaskApp>
        <TaskApp $open>
          <svg width="22" height="22" viewBox="0 0 22 22">
            <path d="M2 2l8-2 10 4 2 16-8 2-12-4z" fill="#e0245e" />
            <path d="M16 1l5 3 1 10-8-8z" fill="#2f7fe0" />
            <rect x="4" y="4" width="14" height="14" fill="#111" />
            <rect x="6" y="14.500" width="6" height="1.400" fill="#fff" />
            <path d="M6.500 7h2.500M7.700 7v5M10.500 7h3v4a1.400 1.400 0 0 1-3 0" stroke="#fff" fill="none" strokeWidth="1.100" />
          </svg>
        </TaskApp>
        <TaskApp $open>
          <svg width="24" height="24" viewBox="0 0 24 24">
            <rect x="2" y="3" width="20" height="15" fill="#dfe4e6" stroke="#9da5a8" />
            <path d="M4 14l4-2 2-5 2 7 2-3 2 2 4-1" stroke="#4a9ad8" fill="none" />
            <ellipse cx="13" cy="21" rx="5" ry="2.500" fill="#bfc4c6" />
          </svg>
        </TaskApp>
        <TaskApp $open>
          <svg width="24" height="24" viewBox="0 0 24 24">
            <path d="M17 1l6 3v16l-6 3L7 14l-4 3-2-1V8l2-1 4 3z" fill="#1e90e8" />
            <path d="M17 6v12l-6-6z" fill="#1a3444" />
          </svg>
        </TaskApp>
        <TaskApp $open>
          <svg width="22" height="22" viewBox="0 0 22 22">
            <rect width="22" height="22" fill="#111" stroke="#777" />
            <rect width="22" height="3" fill="#c4c4c4" />
            <path d="M3 7h4M9 7h2M12 10h6" stroke="#ddd" strokeWidth="1" />
          </svg>
        </TaskApp>
        <Tray>
          <TrayIcon><ChevronUp size={16} strokeWidth={1.5} /></TrayIcon>
          <TrayIcon><BatteryMedium size={18} strokeWidth={1.5} /></TrayIcon>
          <TrayIcon $w={26}><Wifi size={15} strokeWidth={1.5} /></TrayIcon>
          <TrayIcon $w={16}><Volume1 size={17} strokeWidth={1.4} /></TrayIcon>
          <TrayIcon $w={44}><Keyboard size={22} strokeWidth={1.1} /></TrayIcon>
          <Clock>17:49<br />22/12/2022</Clock>
          <Notify>
            <svg width="16" height="15" viewBox="0 0 16 15">
              <path d="M0 0h16v12H6l-3 3v-3H0z" fill="#fff" />
              <path d="M3 3h10M3 6h10M3 9h6" stroke="#1a3444" />
            </svg>
            <NotifyBadge>5</NotifyBadge>
          </Notify>
        </Tray>
      </Taskbar>

      <Watermark>
        <strong>Activer Windows</strong>
        Accédez aux paramètres pour activer Windows.
      </Watermark>
    </Page>
  );
}
